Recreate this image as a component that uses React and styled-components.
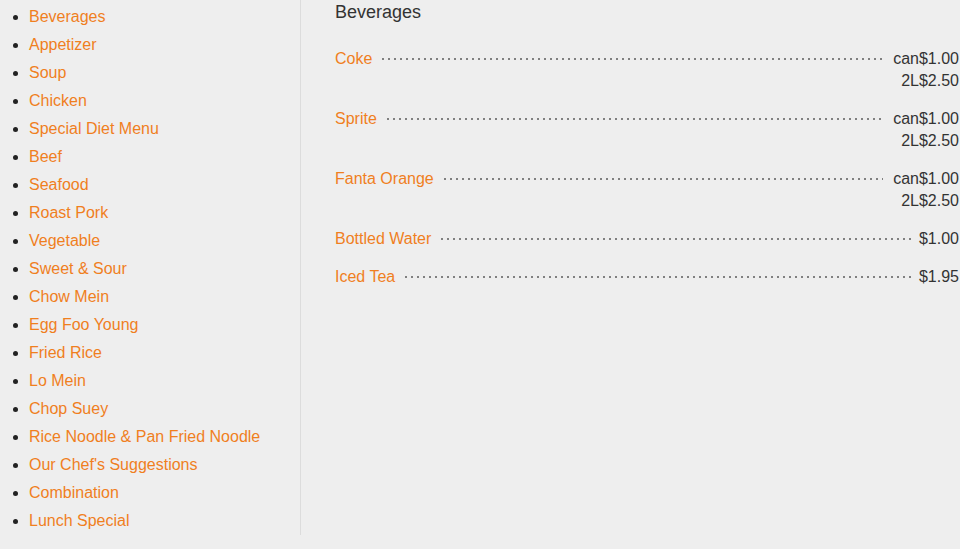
import React from 'react';
import styled, { createGlobalStyle } from 'styled-components';

const GlobalStyle = createGlobalStyle`
    html, body {
        margin: 0;
        background: #eeeeee;
        font-family: "Liberation Sans", Arial, sans-serif;
        font-size: 16px;
        color: #333333;
    }
`

const Page = styled.div`
    display: flex;
    align-items: flex-start;
    width: 960px;
`

const Sidebar = styled.nav`
    width: 300px;
    flex: none;
    border-right: 1px solid #dcdcdc;
    padding: 3px 0 0;
`

const CategoryList = styled.ul`
    margin: 0;
    padding-left: 29px;
    list-style: disc;
    color: #222;
`

const Category = styled.li`
    line-height: 28px;

    a {
        color: #f07f1e;
        text-decoration: none;
    }
`

const Main = styled.main`
    flex: 1;
    padding: 0 1px 0 34px;
`

const Heading = styled.h2`
    margin: 0 0 24px;
    font-size: 18px;
    font-weight: normal;
    line-height: 24px;
    color: #333;
`

const Row = styled.div`
    display: flex;
    align-items: flex-start;
    line-height: 22px;
    margin-bottom: 16px;
`

const Name = styled.a`
    color: #f07f1e;
    text-decoration: none;
    white-space: nowrap;
`

const Leader = styled.span`
    flex: 1;
    height: 22px;
    margin: 0 ${p => p.$gap}px 0 8px;
    background-image: radial-gradient(circle, #808080 0.9px, transparent 1.3px);
    background-size: 6px 4px;
    background-repeat: repeat-x;
    background-position: 0 9px;
`

const Prices = styled.div`
    display: flex;
    flex-direction: column;
    align-items: flex-end;
    color: #333;
    white-space: nowrap;
`

const categories = [
    'Beverages', 'Appetizer', 'Soup', 'Chicken', 'Special Diet Menu', 'Beef',
    'Seafood', 'Roast Pork', 'Vegetable', 'Sweet & Sour', 'Chow Mein',
    'Egg Foo Young', 'Fried Rice', 'Lo Mein', 'Chop Suey',
    'Rice Noodle & Pan Fried Noodle', "Our Chef's Suggestions",
    'Combination', 'Lunch Special'
]

const items = [
    { name: 'Coke', prices: ['can$1.00', '2L$2.50'] },
    { name: 'Sprite', prices: ['can$1.00', '2L$2.50'] },
    { name: 'Fanta Orange', prices: ['can$1.00', '2L$2.50'] },
    { name: 'Bottled Water', prices: ['$1.00'] },
    { name: 'Iced Tea', prices: ['$1.95'] }
]

const App = () => {
    return (
        <>
            <GlobalStyle />
            <Page>
                <Sidebar>
                    <CategoryList>
                        {categories.map(c => (
                            <Category key={c}>
                                <a href="#">{c}</a>
                            </Category>
                        ))}
                    </CategoryList>
                </Sidebar>
                <Main>
                    <Heading>Beverages</Heading>
                    {items.map(({ name, prices }) => (
                        <Row key={name}>
                            <Name href="#">{name}</Name>
                            <Leader $gap={prices.length > 1 ? 10 : 7} />
                            <Prices>
                                {prices.map(p => <span key={p}>{p}</span>)}
                            </Prices>
                        </Row>
                    ))}
                </Main>
            </Page>
        </>
    )
}

export default App;
